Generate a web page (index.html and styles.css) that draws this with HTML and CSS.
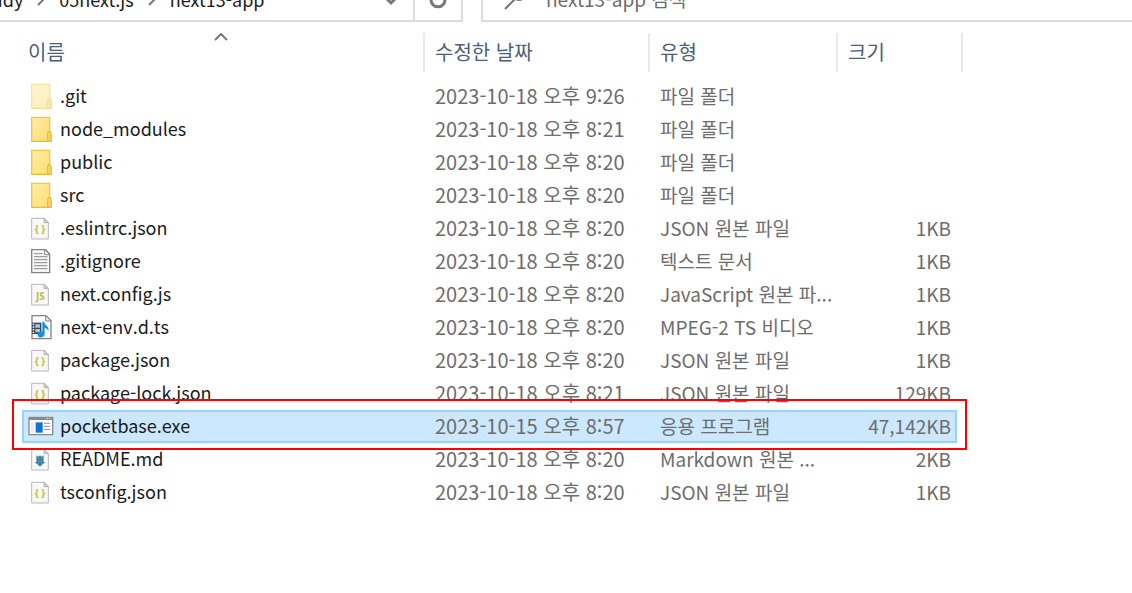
FILE: index.html
```html
<!DOCTYPE html>
<html lang="ko">
<head>
  <meta charset="UTF-8" />
  <meta name="viewport" content="width=device-width, initial-scale=1.0"/>
  <title>next13-app</title>
  <link rel="stylesheet" href="styles.css">
</head>
<body>
  <svg class="defs" aria-hidden="true">
    <linearGradient id="folderFill" x1="0" y1="0" x2="1" y2="1">
      <stop offset="0" stop-color="#ffeda6"/>
      <stop offset="1" stop-color="#fddd72"/>
    </linearGradient>
  </svg>

  <!-- file type icons -->
  <svg class="sprite" aria-hidden="true">
    <symbol id="folder" viewBox="0 0 78 84">
      <path d="M11 4h54v72H11z" fill="url(#folderFill)" stroke="#edc748" stroke-width="4"/>
      <path d="M59 76V52q0-6 5-6h1v-1h1v3q4 1 4 6v22z" fill="#f6d261" stroke="#e3b83c" stroke-width="3"/>
      <path d="M10 76h60" stroke="#e6bb3d" stroke-width="3"/>
    </symbol>
    <symbol id="doc" viewBox="0 0 78 84">
      <path d="M11 10h38l12 12v50H11z" fill="#f8f8f8" stroke="#b9b9b9" stroke-width="3"/>
      <path d="M48 10v13h13z" fill="#d5d5d5" stroke="#a5a5a5" stroke-width="2"/>
    </symbol>
    <symbol id="json" viewBox="0 0 78 84">
      <use href="#doc"/>
      <text x="36" y="53" class="glyph">{ }</text>
    </symbol>
    <symbol id="js" viewBox="0 0 78 84">
      <use href="#doc"/>
      <text x="37" y="56" class="glyph">JS</text>
    </symbol>
    <symbol id="md" viewBox="0 0 78 84">
      <use href="#doc"/>
      <path d="M25 28l6 4 5-4 5 4 6-4v20h5L36 62 20 48h5z" fill="#4289a8"/>
    </symbol>
    <symbol id="txt" viewBox="0 0 78 84">
      <path d="M11 5h41l13 13v56H11z" fill="#f6f6f6" stroke="#858585" stroke-width="4"/>
      <path d="M50 5v15h15z" fill="#fff" stroke="#858585" stroke-width="3"/>
      <path d="M18 17h26M18 26h40M18 35h40M18 44h40M18 53h40M18 62h40" stroke="#8b8b8b" stroke-width="3"/>
    </symbol>
    <symbol id="video" viewBox="0 0 78 84">
      <path d="M12 5h42l15 15v54H12z" fill="#fbfbfb" stroke="#858585" stroke-width="4"/>
      <path d="M53 5v16h16z" fill="#eee" stroke="#858585" stroke-width="3"/>
      <path d="M12 26h28v34H12z" fill="#3c4650"/>
      <path d="M14 31h5M14 39h5M14 47h5M14 55h5" stroke="#fff" stroke-width="4"/>
      <path d="M22 31h14v10H22zM22 45h14v10H22z" fill="#9fc8e6"/>
      <path d="M43 23h5c2 11 17 13 13 29-2-7-6-10-11-11v19c-1 13-21 14-21 2 0-8 8-12 14-9z" fill="#1691e0"/>
    </symbol>
    <symbol id="exe" viewBox="0 0 78 84">
      <path d="M3 13h71v52H3z" fill="#fff" stroke="#8a8a8a" stroke-width="4"/>
      <path d="M3 13h71v8H3z" fill="#8a8a8a"/>
      <path d="M55 16h4M63 16h4" stroke="#e6e6e6" stroke-width="3"/>
      <path d="M23 28h21v31H23z" fill="#0f72d8"/>
      <path d="M8 28h11v31H8z" fill="#ececec"/>
      <path d="M48 31h19M48 40h19M48 49h19" stroke="#949494" stroke-width="3"/>
    </symbol>
  </svg>

  <header class="toolbar">
    <div class="address">
      <nav class="crumbs">
        <a href="#">study</a>
        <svg class="sep" viewBox="0 0 10 14"><path d="M2 1l6 6-6 6"/></svg>
        <a href="#">05next.js</a>
        <svg class="sep" viewBox="0 0 10 14"><path d="M2 1l6 6-6 6"/></svg>
        <a href="#">next13-app</a>
      </nav>
      <button class="history" aria-label="이전 위치"><svg viewBox="0 0 14 10"><path d="M2 2l5 5 5-5"/></svg></button>
      <button class="refresh" aria-label="새로 고침"><svg viewBox="0 0 18 18"><path d="M13 3a7 7 0 1 1-8 0M13 3v5M13 3h4"/></svg></button>
    </div>
    <div class="search">
      <svg viewBox="0 0 24 24"><circle cx="16" cy="7" r="6"/><path d="M12 12L2 22"/></svg>
      <input type="text" aria-label="검색" placeholder="next13-app 검색">
    </div>
  </header>

  <main class="files">
    <table>
      <colgroup>
        <col>
        <col class="col-date">
        <col class="col-type">
        <col class="col-size">
      </colgroup>
      <thead>
        <tr>
          <th>이름<svg class="sort" viewBox="0 0 14 8"><path d="M1 7l6-6 6 6"/></svg></th>
          <th>수정한 날짜</th>
          <th>유형</th>
          <th>크기</th>
        </tr>
      </thead>
      <tbody>
        <tr class="hidden-item"><td><div class="name"><svg><use href="#folder"/></svg>.git</div></td><td>2023-10-18 오후 9:26</td><td>파일 폴더</td><td></td></tr>
        <tr><td><div class="name"><svg><use href="#folder"/></svg>node_modules</div></td><td>2023-10-18 오후 8:21</td><td>파일 폴더</td><td></td></tr>
        <tr><td><div class="name"><svg><use href="#folder"/></svg>public</div></td><td>2023-10-18 오후 8:20</td><td>파일 폴더</td><td></td></tr>
        <tr><td><div class="name"><svg><use href="#folder"/></svg>src</div></td><td>2023-10-18 오후 8:20</td><td>파일 폴더</td><td></td></tr>
        <tr><td><div class="name"><svg><use href="#json"/></svg>.eslintrc.json</div></td><td>2023-10-18 오후 8:20</td><td>JSON 원본 파일</td><td>1KB</td></tr>
        <tr><td><div class="name"><svg><use href="#txt"/></svg>.gitignore</div></td><td>2023-10-18 오후 8:20</td><td>텍스트 문서</td><td>1KB</td></tr>
        <tr><td><div class="name"><svg><use href="#js"/></svg>next.config.js</div></td><td>2023-10-18 오후 8:20</td><td>JavaScript 원본 파...</td><td>1KB</td></tr>
        <tr><td><div class="name"><svg><use href="#video"/></svg>next-env.d.ts</div></td><td>2023-10-18 오후 8:20</td><td>MPEG-2 TS 비디오</td><td>1KB</td></tr>
        <tr><td><div class="name"><svg><use href="#json"/></svg>package.json</div></td><td>2023-10-18 오후 8:20</td><td>JSON 원본 파일</td><td>1KB</td></tr>
        <tr><td><div class="name"><svg><use href="#json"/></svg>package-lock.json</div></td><td>2023-10-18 오후 8:21</td><td>JSON 원본 파일</td><td>129KB</td></tr>
        <tr class="selected"><td><div class="name"><svg><use href="#exe"/></svg>pocketbase.exe</div></td><td>2023-10-15 오후 8:57</td><td>응용 프로그램</td><td>47,142KB</td></tr>
        <tr><td><div class="name"><svg><use href="#md"/></svg>README.md</div></td><td>2023-10-18 오후 8:20</td><td>Markdown 원본 ...</td><td>2KB</td></tr>
        <tr><td><div class="name"><svg><use href="#json"/></svg>tsconfig.json</div></td><td>2023-10-18 오후 8:20</td><td>JSON 원본 파일</td><td>1KB</td></tr>
      </tbody>
    </table>
  </main>
</body>
</html>
```
FILE: styles.css
```css
* {
  margin: 0;
  padding: 0;
  box-sizing: border-box;
}
body {
  font-family: "Noto Sans CJK KR", sans-serif;
  font-size: 19px;
  line-height: 28px;
  color: #1b1b1b;
  background: #fff;
}
.defs {
  position: absolute;
  width: 0;
  height: 0;
}
.sprite {
  display: none;
}
.glyph {
  font-family: "Open Sans", sans-serif;
  font-size: 30px;
  font-weight: bold;
  fill: #b9bd3c;
  text-anchor: middle;
}

/* the window is scrolled past the upper half of the toolbar */
.toolbar {
  display: flex;
  align-items: flex-end;
  gap: 18px;
  height: 22px;
  overflow: hidden;
}
.address, .search {
  display: flex;
  align-items: center;
  height: 46px;
  flex-shrink: 0;
  border: 2px solid #dcdedd;
}
.address {
  width: 463px;
  border-left: none;
}
.crumbs {
  display: flex;
  align-items: center;
  flex: 1;
  gap: 13px;
  margin-left: -23px;
  font-size: 18px;
}
.crumbs a {
  color: #1b1b1b;
  text-decoration: none;
}
.toolbar svg {
  fill: none;
  stroke: #777;
  stroke-width: 2;
}
.sep {
  width: 10px;
  height: 14px;
}
.address button {
  height: 100%;
  padding-top: 4px;
  border: none;
  background: none;
}
.address .history {
  width: 44px;
}
.address .history svg {
  width: 14px;
  height: 10px;
  stroke-width: 3;
}
.address .refresh {
  width: 48px;
  border-left: 2px solid #dcdedd;
}
.address .refresh svg {
  width: 18px;
  height: 18px;
  stroke-width: 3;
}
.search {
  flex: 1;
  gap: 19px;
  padding-left: 20px;
  border-right: none;
}
.search svg {
  width: 24px;
  height: 24px;
}
.search input {
  flex: 1;
  border: none;
  outline: none;
  font: inherit;
}
.search input::placeholder {
  color: #6d6d6d;
}

.files {
  padding: 11px 175px 0 22px;
}
table {
  width: 100%;
  table-layout: fixed;
  border-collapse: separate;
  border-spacing: 0;
}
.col-date {
  width: 225px;
}
.col-type {
  width: 188px;
}
.col-size {
  width: 119px;
}
th {
  position: relative;
  height: 39px;
  padding: 0 0 1px 10px;
  font-size: 20px;
  font-weight: normal;
  text-align: left;
  color: #4c607a;
}
th:first-child {
  padding-left: 6px;
}
th:not(:last-child) {
  border-right: 2px solid #e8e8e8;
}
th:last-child::after {
  content: '';
  position: absolute;
  top: 0;
  right: -6px;
  height: 100%;
  border-right: 2px solid #e8e8e8;
}
.sort {
  position: absolute;
  top: 0;
  left: 48%;
  width: 14px;
  height: 8px;
  fill: none;
  stroke: #777;
  stroke-width: 2;
}
tbody::before {
  content: '';
  display: table-row;
  height: 8px;
}
td {
  height: 33px;
  padding: 0 0 1px 10px;
  line-height: 28px;
  color: #6d6d6d;
  white-space: nowrap;
}
td:first-child {
  padding: 0 0 0 6px;
  font-size: 18px;
  line-height: 24px;
  color: #1b1b1b;
}
td:nth-child(2) {
  font-size: 20px;
}
td:last-child {
  padding-right: 6px;
  text-align: right;
}
.name {
  display: flex;
  align-items: flex-start;
  gap: 6px;
}
.name svg {
  width: 26px;
  height: 28px;
}
.hidden-item svg {
  opacity: 0.5;
}
.selected {
  position: relative;
  background: #cce8ff;
  outline: 2px solid #99d1ff;
  outline-offset: -2px;
}
/* red marker frame around the picked file */
.selected td:first-child::after {
  content: '';
  position: absolute;
  inset: -11px -10px -7px -10px;
  border: 2px solid #f00;
}
```
